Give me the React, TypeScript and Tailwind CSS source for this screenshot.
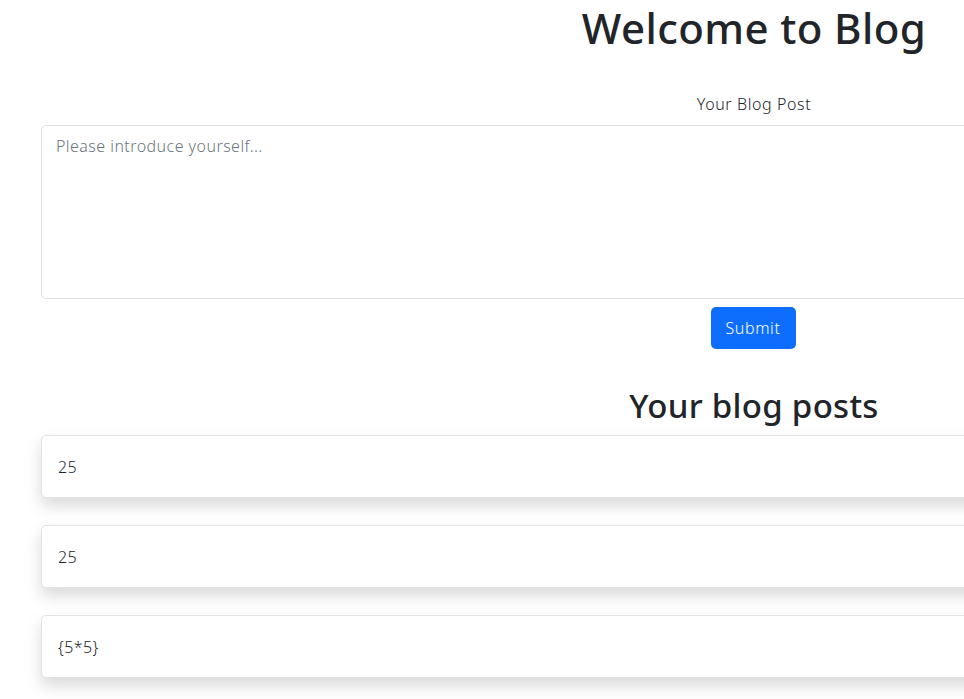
import React from 'react';

const posts = ['25', '25', '{5*5}'];

const App = () => {
  return (
    <div className="w-full min-h-[699px] overflow-hidden bg-white text-[#212529] font-['Noto_Sans',sans-serif]">
      <div className="ml-[41px] w-[1426px] flex flex-col items-center">
        <h1 className="text-[42px] leading-[48px] font-medium tracking-[0.4px] mt-[4px]">Welcome to Blog</h1>

        <label className="mt-[40px] text-[16px] leading-[24px] font-light tracking-[0.6px]">Your Blog Post</label>
        <textarea
          className="mt-[9px] w-full h-[174px] border border-[#dee2e6] rounded-[5px] px-[14px] py-[8px] text-[16px] leading-[24px] font-light tracking-[0.45px] resize-none outline-none placeholder:text-[#6c757d]"
          placeholder="Please introduce yourself..."
        />
        <button className="mt-[8px] -ml-[2px] h-[42px] w-[85px] rounded-[5px] bg-[#0d6efd] text-white text-[16px] font-light tracking-[0.6px]">
          Submit
        </button>

        <h2 className="mt-[37px] text-[33px] leading-[40px] font-medium tracking-[0.3px]">Your blog posts</h2>

        <div className="mt-[9px] w-full flex flex-col gap-[27px]">
          {posts.map((post, i) => (
            <div
              key={i}
              className="h-[63px] flex items-center px-[16px] border border-[#e3e3e3] rounded-[5px] bg-white shadow-[0_8px_16px_rgba(0,0,0,0.15)]"
            >
              <span className="text-[16px] font-light tracking-[0.4px]">{post}</span>
            </div>
          ))}
        </div>
      </div>
    </div>
  );
};

export default App;
